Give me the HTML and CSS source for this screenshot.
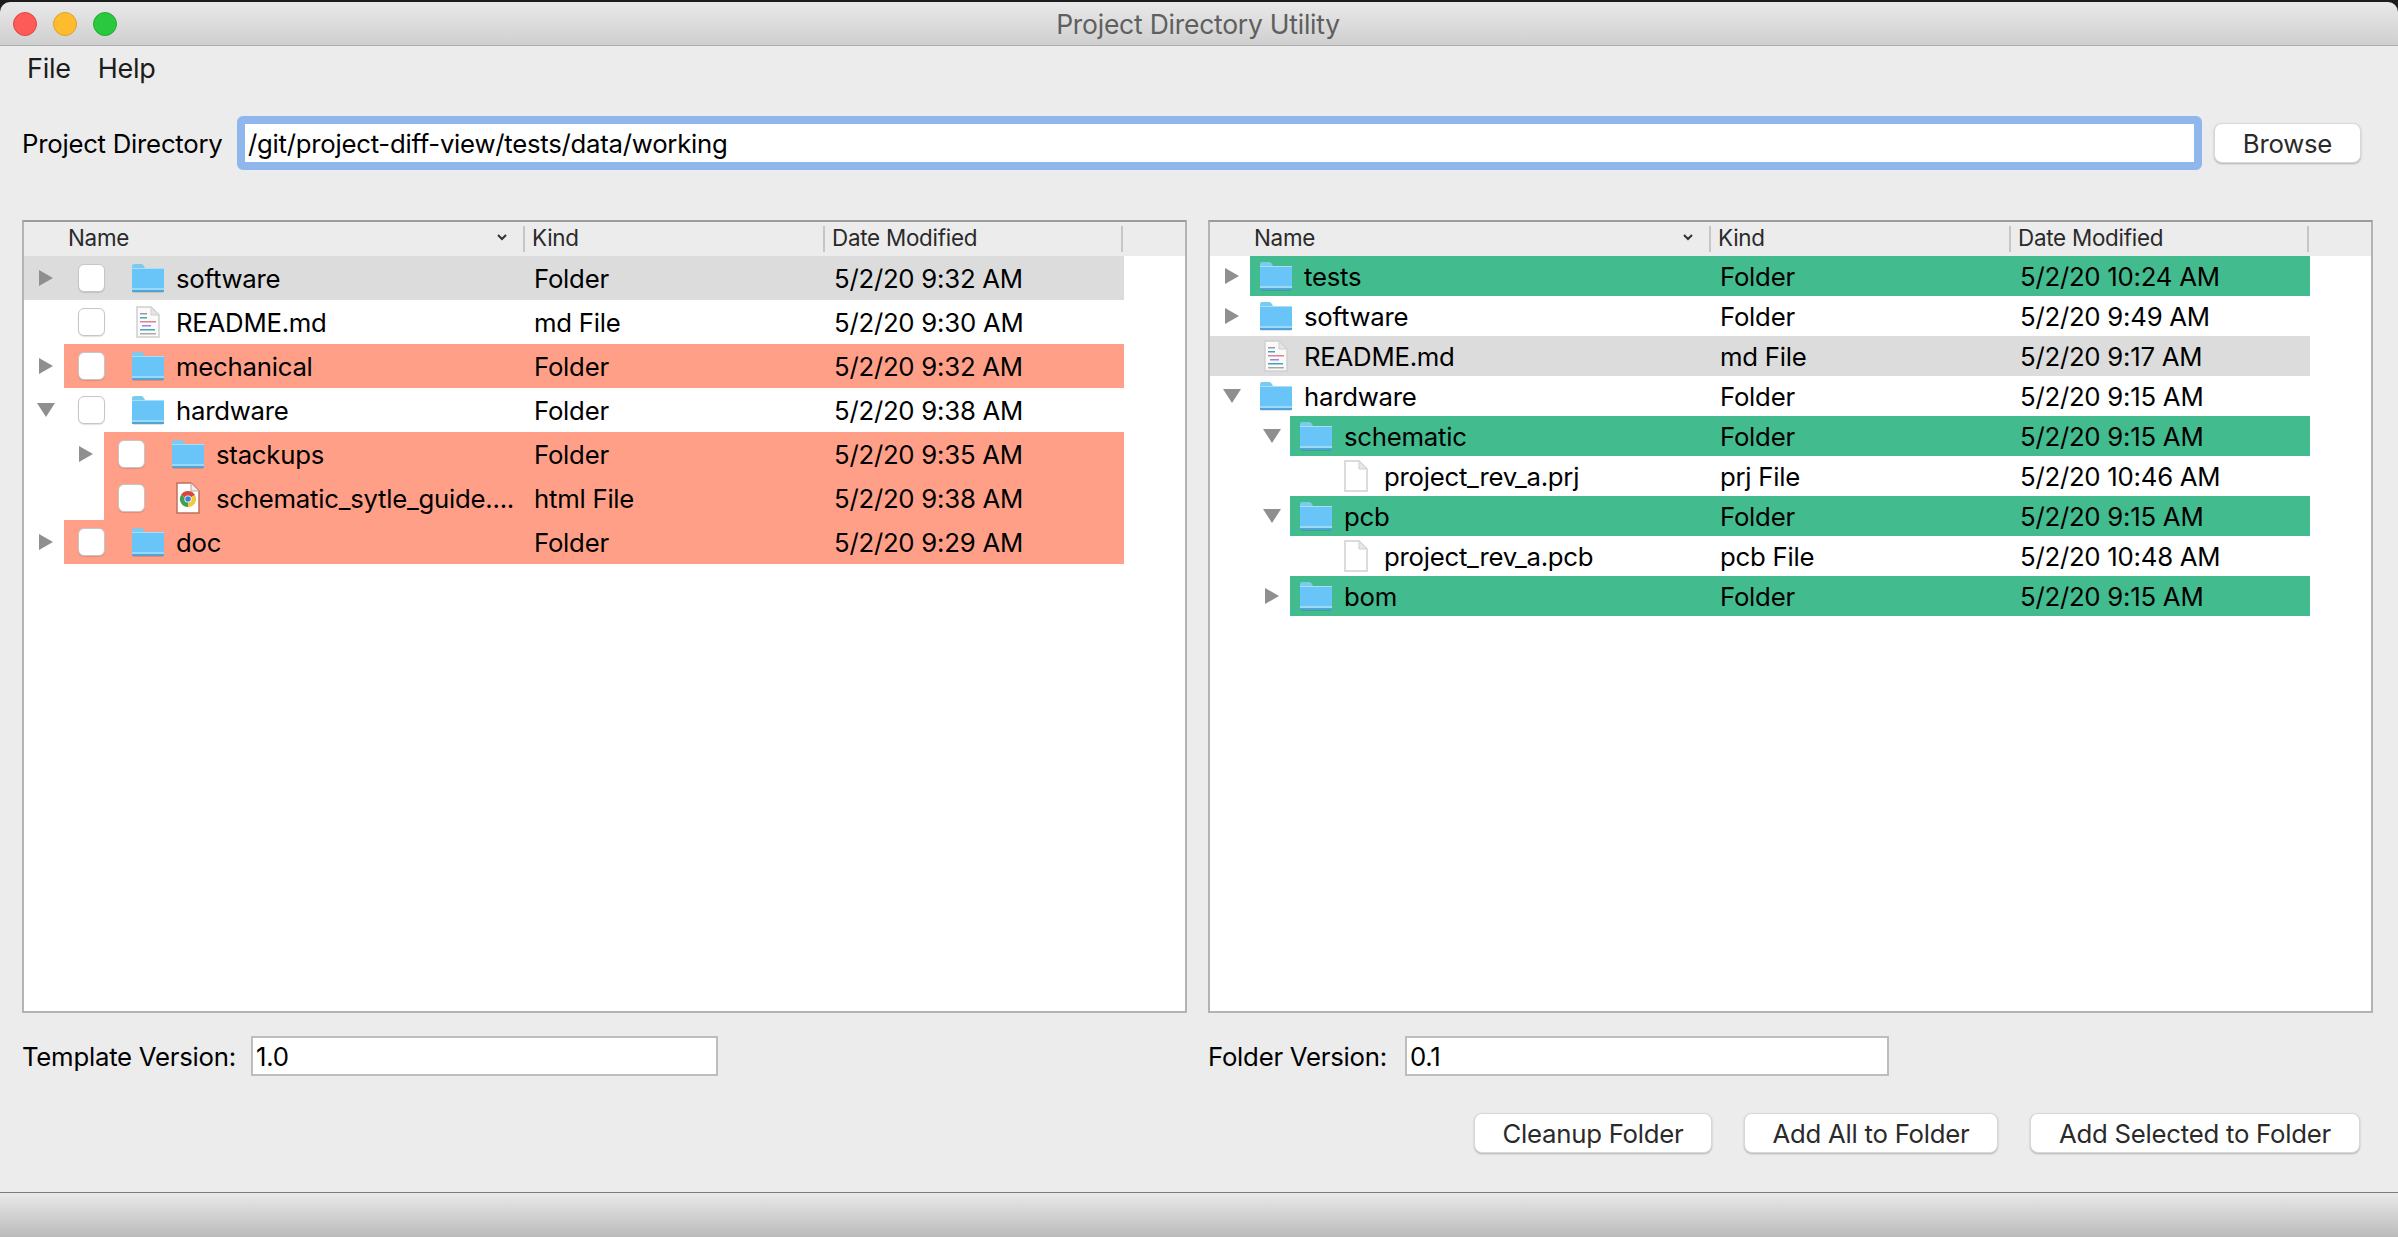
FILE: index.html
```html
<!DOCTYPE html>
<html lang="en">
<head>
    <meta charset="UTF-8">
    <meta name="viewport" content="width=device-width, initial-scale=1.0">
    <title>Project Directory Utility</title>
    <link rel="stylesheet" href="styles.css">
</head>
<body>
    <!-- Shared file icons -->
    <svg class="icon-defs" aria-hidden="true">
        <symbol id="icon-folder" viewBox="0 0 32 30">
            <path d="M0 3 Q0 1 2 1 H9 Q11 1 12 3 L13 5 H32 V28 H0 Z" fill="#7ccbee"/>
            <rect x="0" y="6" width="32" height="19" fill="#69c4f8"/>
            <rect x="0" y="5" width="32" height="1" fill="#a4e0fb"/>
            <rect x="0" y="25" width="32" height="2" fill="#9ad9f7"/>
            <rect x="0" y="27" width="32" height="2" fill="#4fa5d8"/>
            <rect x="1" y="29" width="30" height="1" fill="#000" opacity="0.12"/>
        </symbol>
        <symbol id="icon-file" viewBox="0 0 24 32">
            <path d="M1 1 H15 L23 9 V31 H1 Z" fill="#fff" stroke="#cfcfcf" stroke-width="1.5"/>
            <path d="M15 1 V9 H23 Z" fill="#e8e8e8" stroke="#cfcfcf"/>
        </symbol>
        <symbol id="icon-md" viewBox="0 0 24 32">
            <path d="M1 1 H15 L23 9 V31 H1 Z" fill="#fafafa" stroke="#cfcfcf" stroke-width="1.5"/>
            <path d="M15 1 V9 H23 Z" fill="#e4e4e4" stroke="#cfcfcf"/>
            <rect x="4" y="7" width="7" height="1.5" fill="#9a9a9a"/>
            <rect x="4" y="11" width="7" height="1.5" fill="#3fa8b0"/>
            <rect x="4" y="15" width="16" height="1.5" fill="#d8868c"/>
            <rect x="6" y="19" width="9" height="1.5" fill="#a67cf0"/>
            <rect x="4" y="23" width="15" height="1.5" fill="#3fa8b0"/>
            <rect x="4" y="27" width="16" height="1.5" fill="#a8a8a8"/>
        </symbol>
        <symbol id="icon-chrome" viewBox="0 0 24 32">
            <path d="M1 1 H15 L23 9 V31 H1 Z" fill="#fff" stroke="#c0705c" stroke-width="1.5"/>
            <path d="M15 1 V9 H23 Z" fill="#eee" stroke="#c0a090"/>
            <path d="M12 9 A8 8 0 0 1 19 13 L12 17 L5 13 A8 8 0 0 1 12 9 Z" fill="#d8483a"/>
            <path d="M19 13 A8 8 0 0 1 12 25 L12 17 Z" fill="#f2c83c"/>
            <path d="M5 13 A8 8 0 0 0 12 25 L12 17 Z" fill="#3fa04e"/>
            <circle cx="12" cy="17" r="3.6" fill="#fff"/>
            <circle cx="12" cy="17" r="2.8" fill="#3f7fe0"/>
        </symbol>
    </svg>

    <div class="window">
        <div class="titlebar">
            <div class="traffic-lights">
                <span class="light light-close"></span>
                <span class="light light-min"></span>
                <span class="light light-max"></span>
            </div>
            <span class="window-title">Project Directory Utility</span>
        </div>

        <nav class="menubar">
            <a href="#">File</a>
            <a href="#">Help</a>
        </nav>

        <div class="path-row">
            <label for="projectDir">Project Directory</label>
            <input class="path-input" type="text" id="projectDir" value="/git/project-diff-view/tests/data/working">
            <button class="btn btn-browse" type="button">Browse</button>
        </div>

        <main class="panes">
            <!-- Template tree -->
            <section class="tree tree-check">
                <div class="tree-head">
                    <div class="head-cell head-name">Name
                        <svg class="sort-arrow" viewBox="0 0 12 8"><path d="M2 2 L6 6 L10 2" fill="none" stroke="#333" stroke-width="2"/></svg>
                    </div>
                    <div class="head-cell head-kind">Kind</div>
                    <div class="head-cell head-date">Date Modified</div>
                </div>
                <div class="tree-rows">
                    <div class="tree-row selected">
                        <span class="twisty closed"></span>
                        <div class="row-body">
                            <div class="cell-name"><span class="check"></span><svg class="folder"><use href="#icon-folder"/></svg><span class="name">software</span></div>
                            <div class="cell-kind">Folder</div>
                            <div class="cell-date">5/2/20 9:32 AM</div>
                        </div>
                    </div>
                    <div class="tree-row">
                        <span class="twisty"></span>
                        <div class="row-body">
                            <div class="cell-name"><span class="check"></span><svg class="file"><use href="#icon-md"/></svg><span class="name">README.md</span></div>
                            <div class="cell-kind">md File</div>
                            <div class="cell-date">5/2/20 9:30 AM</div>
                        </div>
                    </div>
                    <div class="tree-row">
                        <span class="twisty closed"></span>
                        <div class="row-body removed">
                            <div class="cell-name"><span class="check"></span><svg class="folder"><use href="#icon-folder"/></svg><span class="name">mechanical</span></div>
                            <div class="cell-kind">Folder</div>
                            <div class="cell-date">5/2/20 9:32 AM</div>
                        </div>
                    </div>
                    <div class="tree-row">
                        <span class="twisty open"></span>
                        <div class="row-body">
                            <div class="cell-name"><span class="check"></span><svg class="folder"><use href="#icon-folder"/></svg><span class="name">hardware</span></div>
                            <div class="cell-kind">Folder</div>
                            <div class="cell-date">5/2/20 9:38 AM</div>
                        </div>
                    </div>
                    <div class="tree-row depth-1">
                        <span class="twisty closed"></span>
                        <div class="row-body removed">
                            <div class="cell-name"><span class="check"></span><svg class="folder"><use href="#icon-folder"/></svg><span class="name">stackups</span></div>
                            <div class="cell-kind">Folder</div>
                            <div class="cell-date">5/2/20 9:35 AM</div>
                        </div>
                    </div>
                    <div class="tree-row depth-1">
                        <span class="twisty"></span>
                        <div class="row-body removed">
                            <div class="cell-name"><span class="check"></span><svg class="file"><use href="#icon-chrome"/></svg><span class="name">schematic_sytle_guide....</span></div>
                            <div class="cell-kind">html File</div>
                            <div class="cell-date">5/2/20 9:38 AM</div>
                        </div>
                    </div>
                    <div class="tree-row">
                        <span class="twisty closed"></span>
                        <div class="row-body removed">
                            <div class="cell-name"><span class="check"></span><svg class="folder"><use href="#icon-folder"/></svg><span class="name">doc</span></div>
                            <div class="cell-kind">Folder</div>
                            <div class="cell-date">5/2/20 9:29 AM</div>
                        </div>
                    </div>
                </div>
            </section>

            <!-- Working folder tree -->
            <section class="tree tree-plain">
                <div class="tree-head">
                    <div class="head-cell head-name">Name
                        <svg class="sort-arrow" viewBox="0 0 12 8"><path d="M2 2 L6 6 L10 2" fill="none" stroke="#333" stroke-width="2"/></svg>
                    </div>
                    <div class="head-cell head-kind">Kind</div>
                    <div class="head-cell head-date">Date Modified</div>
                </div>
                <div class="tree-rows">
                    <div class="tree-row">
                        <span class="twisty closed"></span>
                        <div class="row-body added">
                            <div class="cell-name"><svg class="folder"><use href="#icon-folder"/></svg><span class="name">tests</span></div>
                            <div class="cell-kind">Folder</div>
                            <div class="cell-date">5/2/20 10:24 AM</div>
                        </div>
                    </div>
                    <div class="tree-row">
                        <span class="twisty closed"></span>
                        <div class="row-body">
                            <div class="cell-name"><svg class="folder"><use href="#icon-folder"/></svg><span class="name">software</span></div>
                            <div class="cell-kind">Folder</div>
                            <div class="cell-date">5/2/20 9:49 AM</div>
                        </div>
                    </div>
                    <div class="tree-row selected">
                        <span class="twisty"></span>
                        <div class="row-body">
                            <div class="cell-name"><svg class="file"><use href="#icon-md"/></svg><span class="name">README.md</span></div>
                            <div class="cell-kind">md File</div>
                            <div class="cell-date">5/2/20 9:17 AM</div>
                        </div>
                    </div>
                    <div class="tree-row">
                        <span class="twisty open"></span>
                        <div class="row-body">
                            <div class="cell-name"><svg class="folder"><use href="#icon-folder"/></svg><span class="name">hardware</span></div>
                            <div class="cell-kind">Folder</div>
                            <div class="cell-date">5/2/20 9:15 AM</div>
                        </div>
                    </div>
                    <div class="tree-row depth-1">
                        <span class="twisty open"></span>
                        <div class="row-body added">
                            <div class="cell-name"><svg class="folder"><use href="#icon-folder"/></svg><span class="name">schematic</span></div>
                            <div class="cell-kind">Folder</div>
                            <div class="cell-date">5/2/20 9:15 AM</div>
                        </div>
                    </div>
                    <div class="tree-row depth-2">
                        <span class="twisty"></span>
                        <div class="row-body">
                            <div class="cell-name"><svg class="file"><use href="#icon-file"/></svg><span class="name">project_rev_a.prj</span></div>
                            <div class="cell-kind">prj File</div>
                            <div class="cell-date">5/2/20 10:46 AM</div>
                        </div>
                    </div>
                    <div class="tree-row depth-1">
                        <span class="twisty open"></span>
                        <div class="row-body added">
                            <div class="cell-name"><svg class="folder"><use href="#icon-folder"/></svg><span class="name">pcb</span></div>
                            <div class="cell-kind">Folder</div>
                            <div class="cell-date">5/2/20 9:15 AM</div>
                        </div>
                    </div>
                    <div class="tree-row depth-2">
                        <span class="twisty"></span>
                        <div class="row-body">
                            <div class="cell-name"><svg class="file"><use href="#icon-file"/></svg><span class="name">project_rev_a.pcb</span></div>
                            <div class="cell-kind">pcb File</div>
                            <div class="cell-date">5/2/20 10:48 AM</div>
                        </div>
                    </div>
                    <div class="tree-row depth-1">
                        <span class="twisty closed"></span>
                        <div class="row-body added">
                            <div class="cell-name"><svg class="folder"><use href="#icon-folder"/></svg><span class="name">bom</span></div>
                            <div class="cell-kind">Folder</div>
                            <div class="cell-date">5/2/20 9:15 AM</div>
                        </div>
                    </div>
                </div>
            </section>
        </main>

        <div class="version-row">
            <div class="version-field">
                <label for="templateVersion">Template Version:</label>
                <input class="version-input" type="text" id="templateVersion" value="1.0">
            </div>
            <div class="version-field">
                <label for="folderVersion">Folder Version:</label>
                <input class="version-input" type="text" id="folderVersion" value="0.1">
            </div>
        </div>

        <div class="actions">
            <button class="btn btn-cleanup" type="button">Cleanup Folder</button>
            <button class="btn btn-all" type="button">Add All to Folder</button>
            <button class="btn btn-selected" type="button">Add Selected to Folder</button>
        </div>

        <footer class="statusbar"></footer>
    </div>
</body>
</html>
```

FILE: styles.css
```css
/* General Styles */
* {
    box-sizing: border-box;
}

body {
    font-family: Inter, "Liberation Sans", sans-serif;
    font-size: 25.75px;
    letter-spacing: -0.25px;
    margin: 0;
    background-color: #1d1d1d;
    color: #000;
    overflow: hidden;
}

.icon-defs {
    display: none;
}

/* Window Layout */
.window {
    display: flex;
    flex-direction: column;
    height: 100vh;
    padding-top: 2px;
}

/* Title Bar */
.titlebar {
    position: relative;
    display: flex;
    align-items: center;
    justify-content: center;
    height: 44px;
    background: linear-gradient(#e9e9e9, #cfcfcf);
    border-bottom: 1px solid #adadad;
    border-radius: 10px 10px 0 0;
    flex: none;
}

.traffic-lights {
    position: absolute;
    left: 13px;
    top: 10px;
    display: flex;
    gap: 16px;
}

.light {
    width: 24px;
    height: 24px;
    border-radius: 50%;
}

.light-close {
    background: #fc5b57;
    border: 1px solid #e2443f;
}

.light-min {
    background: #fdbc2e;
    border: 1px solid #e0a028;
}

.light-max {
    background: #29c83f;
    border: 1px solid #22ac30;
}

.window-title {
    margin-left: -2px;
    color: #5f5f5f;
    font-size: 26.5px;
}

/* Menu Bar */
.menubar {
    display: flex;
    gap: 27px;
    height: 44px;
    padding: 0 27px;
    align-items: center;
    font-size: 27px;
    background: #ececec;
    flex: none;
}

.menubar a {
    color: #1c1c1c;
    text-decoration: none;
}

/* Project Directory Row */
.path-row {
    display: flex;
    align-items: center;
    height: 130px;
    padding: 0 37px 24px 22px;
    background: #ececec;
    flex: none;
}

.path-row label {
    width: 215px;
    flex: none;
}

.path-input {
    flex: 1;
    height: 54px;
    padding: 0 3px;
    font: inherit;
    letter-spacing: inherit;
    background: #fff;
    border: 8px solid #8fb7ee;
    border-radius: 6px;
    outline: none;
}

.btn {
    height: 40px;
    padding: 0;
    font: inherit;
    letter-spacing: inherit;
    color: #2a2a2a;
    background: #fff;
    border: 1px solid #d9d9d9;
    border-radius: 8px;
    box-shadow: 0 1px 2px rgba(0, 0, 0, 0.25);
    flex: none;
}

.btn-browse {
    width: 147px;
    margin-left: 12px;
}

/* Tree Panes */
.panes {
    display: flex;
    gap: 21px;
    height: 793px;
    padding: 0 25px 0 22px;
    background: #ececec;
    flex: none;
}

.tree {
    flex: 1;
    display: flex;
    flex-direction: column;
    background: #fff;
    border: 2px solid #b3b3b3;
    border-top-color: #9c9c9c;
}

.tree-head {
    display: flex;
    align-items: center;
    height: 34px;
    font-size: 22.4px;
    color: #2a2a2a;
    background: #ececec;
    flex: none;
}

.head-cell {
    display: flex;
    align-items: center;
    justify-content: space-between;
    height: 26px;
    padding-left: 7px;
    padding-bottom: 4px;
    border-left: 2px solid #c6c6c6;
    flex: none;
}

.head-name {
    width: 499px;
    padding: 0 15px 4px 44px;
    border-left: none;
}

.head-kind {
    width: 300px;
}

.head-date {
    width: 300px;
    border-right: 2px solid #c6c6c6;
}

.sort-arrow {
    width: 12px;
    height: 8px;
}

/* Tree Rows */
.tree-rows {
    width: 1100px;
}

.tree-row {
    display: flex;
    align-items: stretch;
}

.tree-check .tree-row {
    height: 44px;
}

.tree-plain .tree-row {
    height: 40px;
}

.tree-row.selected {
    background: #dcdcdc;
}

.depth-1 {
    padding-left: 40px;
}

.depth-2 {
    padding-left: 80px;
}

.row-body {
    display: flex;
    align-items: center;
    flex: 1;
    min-width: 0;
}

.removed {
    background: #ff9f87;
}

.added {
    background: #42bb8f;
}

.cell-name {
    display: flex;
    align-items: center;
    flex: 1;
    min-width: 0;
    white-space: nowrap;
}

.cell-kind {
    width: 300px;
    flex: none;
}

.cell-date {
    width: 290px;
    flex: none;
}

/* Disclosure triangles */
.twisty {
    display: flex;
    align-items: center;
    width: 40px;
    padding-left: 15px;
    flex: none;
}

.twisty.closed::before {
    content: "";
    border-left: 14px solid #8f8f8f;
    border-top: 8px solid transparent;
    border-bottom: 8px solid transparent;
}

.twisty.open::before {
    content: "";
    margin-left: -2px;
    border-top: 14px solid #8f8f8f;
    border-left: 9px solid transparent;
    border-right: 9px solid transparent;
}

.check {
    width: 27px;
    height: 28px;
    margin-left: 14px;
    margin-right: 27px;
    background: #fff;
    border: 1px solid #c6c6c6;
    border-radius: 6px;
    box-shadow: 0 1px 1px rgba(0, 0, 0, 0.12);
    flex: none;
}

.folder {
    width: 32px;
    height: 30px;
    flex: none;
}

.file {
    width: 24px;
    height: 32px;
    margin-left: 4px;
    margin-right: 4px;
    flex: none;
}

.name {
    margin-left: 12px;
}

.tree-plain .folder {
    margin-left: 10px;
}

.tree-plain .file {
    margin-left: 14px;
}

/* Version Fields */
.version-row {
    display: flex;
    gap: 21px;
    height: 100px;
    padding: 23px 25px 0 22px;
    background: #ececec;
    flex: none;
}

.version-field {
    display: flex;
    align-items: center;
    flex: 1;
    height: 40px;
}

.version-field label {
    width: 229px;
    flex: none;
}

.version-input {
    width: 467px;
    height: 40px;
    padding: 0 3px;
    font: inherit;
    letter-spacing: inherit;
    background: #fff;
    border: 2px solid #bdbdbd;
    outline: none;
}

.version-field + .version-field label {
    width: 197px;
}

.version-field + .version-field .version-input {
    width: 484px;
}

/* Action Buttons */
.actions {
    display: flex;
    justify-content: flex-end;
    gap: 32px;
    height: 79px;
    padding-right: 38px;
    background: #ececec;
    flex: none;
}

.btn-cleanup {
    width: 238px;
}

.btn-all {
    width: 254px;
}

.btn-selected {
    width: 330px;
}

/* Status Bar */
.statusbar {
    flex: 1;
    background: linear-gradient(#e9e9e9, #bbb);
    border-top: 1px solid #7b7b7b;
}
```
